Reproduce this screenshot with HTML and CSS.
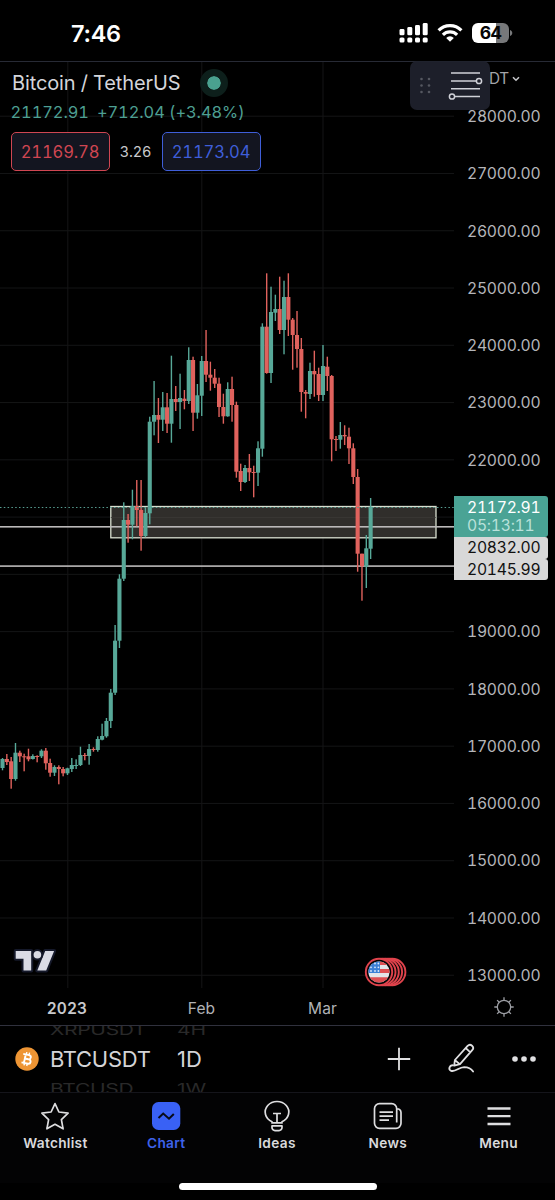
FILE: index.html
```html
<!DOCTYPE html>
<html lang="en">
<head>
<meta charset="utf-8">
<title>Bitcoin / TetherUS</title>
<link rel="stylesheet" href="styles.css">
</head>
<body>
<div class="phone">
  <header class="status">
    <div class="clock">7:46</div>
    <div class="indicators">
      <svg class="signal" width="29" height="20" viewBox="0 0 29 20" fill="#fff">
        <rect x="0.5" y="6" width="5" height="6.3" rx="1.4"/><rect x="8.3" y="4" width="5" height="8.3" rx="1.4"/><rect x="16" y="2" width="5" height="10.3" rx="1.4"/><rect x="23.7" y="0" width="5" height="12.3" rx="1.4"/>
        <rect x="0.5" y="14.6" width="5" height="5" rx="1.5"/><rect x="8.3" y="14.6" width="5" height="5" rx="1.5"/><rect x="16" y="14.6" width="5" height="5" rx="1.5"/><rect x="23.7" y="14.6" width="5" height="5" rx="1.5"/>
      </svg>
      <svg class="wifi" width="26" height="20" viewBox="0 0 26 20" fill="none" stroke="#fff" stroke-width="3.2">
        <path d="M1.6 7.4a16.2 16.2 0 0 1 22.8 0"/><path d="M5.900 11.800a10.100 10.100 0 0 1 14.200 0"/>
        <path d="M13 18.700l-3.800-3.800a5.400 5.400 0 0 1 7.600 0z" fill="#fff" stroke="none"/>
      </svg>
      <div class="battery"><span class="level">64</span></div>
      <svg class="cap" width="4" height="8" viewBox="0 0 4 8"><path d="M0 1c3 1 3 5 0 6z" fill="#77787a"/></svg>
    </div>
  </header>

  <main class="chart">
    <svg class="plot" id="plot" width="454" height="926" viewBox="0 62 454 926"></svg>
    <div class="prices" id="prices"></div>
    <div class="times"><span class="year">2023</span><span class="feb">Feb</span><span class="mar">Mar</span></div>
    <div class="gear">
      <svg width="22" height="22" viewBox="0 0 22 22" fill="none" stroke="#9b9da3" stroke-width="1.3"><circle cx="11" cy="11" r="6.7"/><path d="M11 1.300v3M11 17.700v3M1.300 11h3M17.700 11h3M4.100 4.100l2.100 2.100M15.800 15.800l2.100 2.100M17.900 4.100l-2.100 2.100M6.200 15.800l-2.100 2.100"/></svg>
    </div>

    <section class="legend">
      <div class="title"><span>Bitcoin / TetherUS</span><i class="live"></i></div>
      <div class="change"><span>21172.91</span><span>+712.04 (+3.48%)</span></div>
      <div class="quotes"><span class="quote sell">21169.78</span><span class="spread">3.26</span><span class="quote buy">21173.04</span></div>
    </section>

    <div class="currency"><span>DT</span><svg width="8" height="6" viewBox="0 0 8 6" fill="none" stroke="#c4c5c9" stroke-width="1.6"><path d="M1 1.200l3 3 3-3"/></svg></div>
    <div class="toolbox">
      <svg width="80" height="49" viewBox="0 0 80 49">
        <g fill="#555760"><circle cx="11.500" cy="18" r="1.300"/><circle cx="19" cy="18" r="1.300"/><circle cx="11.500" cy="24.500" r="1.300"/><circle cx="19" cy="24.500" r="1.300"/><circle cx="11.500" cy="31" r="1.300"/><circle cx="19" cy="31" r="1.300"/></g>
        <g fill="none" stroke="#d0d1d8" stroke-width="1.500"><path d="M41 12h29M41 20h25.500M41 27.800h29M44.500 35.500H70"/><circle cx="69" cy="20" r="2.600"/><circle cx="42" cy="35.500" r="2.600"/></g>
      </svg>
    </div>

    <div class="tags">
      <div class="tag last"><span>21172.91</span><span class="countdown">05:13:11</span></div>
      <div class="tag level-tag">20832.00</div>
      <div class="tag level-tag">20145.99</div>
    </div>

    <svg class="brand" width="48" height="30" viewBox="0 0 48 30"><g fill="#dadbe5" stroke="#15192a" stroke-width="4" stroke-linejoin="round" paint-order="stroke"><path d="M4.700 5h15.500v19.500h-7.700V12.700H4.700z"/><path d="M34.200 5h8.900L35.200 24.500h-8.900z"/><circle cx="26.400" cy="8.800" r="3.800"/></g></svg>
    <svg class="events" width="44" height="30" viewBox="0 0 44 30">
      <defs><clipPath id="flag"><circle cx="15" cy="15" r="10.600"/></clipPath></defs>
      <g fill="#050506" stroke="#e0434c" stroke-width="1.900"><circle cx="28.200" cy="15" r="13.200"/><circle cx="24.900" cy="15" r="13.200"/><circle cx="21.600" cy="15" r="13.200"/><circle cx="18.300" cy="15" r="13.200"/><circle cx="15" cy="15" r="13.200"/></g>
      <g clip-path="url(#flag)"><path fill="#e3e5ea" d="M0 0h30v30H0z"/><path fill="#de4f53" d="M15 3.800h13v4.100H15zM15 12h13v4H15zM3 20.200h25v6H3z"/><path fill="#3c80d6" d="M3 3h13v13H3z"/><g fill="#dbe7fa"><circle cx="7" cy="6.500" r=".9"/><circle cx="11" cy="6.500" r=".9"/><circle cx="14.400" cy="6.500" r=".9"/><circle cx="7" cy="10.300" r=".9"/><circle cx="11" cy="10.300" r=".9"/><circle cx="14.400" cy="10.300" r=".9"/><circle cx="7" cy="14" r=".9"/><circle cx="11" cy="14" r=".9"/><circle cx="14.400" cy="14" r=".9"/></g></g>
    </svg>
  </main>

  <section class="picker">
    <svg class="coin" width="24" height="24" viewBox="0 0 24 24"><circle cx="12" cy="12" r="11.700" fill="#ee9534"/><g transform="rotate(12 12 12)" fill="none" stroke="#fff" stroke-width="1.900"><path d="M7.300 7.800h6a2.100 2.100 0 0 1 0 4.200H9.700M9.700 12h4.200a2.200 2.200 0 0 1 0 4.400H7.300M9.800 7.800v8.600"/><path d="M10.400 5.300v2.500M13.200 5.300v2.500M10.400 16.400v2.500M13.200 16.400v2.500" stroke-width="1.400"/></g></svg>
    <div class="wheel symbols"><span class="ghost above">XRPUSDT</span><span class="current">BTCUSDT</span><span class="ghost below">BTCUSD</span></div>
    <div class="wheel intervals"><span class="ghost above">4H</span><span class="current">1D</span><span class="ghost below">1W</span></div>
    <div class="actions">
      <svg width="24" height="24" viewBox="0 0 24 24" stroke="#e0e0e2" stroke-width="1.800"><path d="M12 .8v22.400M.8 12h22.400"/></svg>
      <svg class="pen" width="30" height="32" viewBox="0 0 30 32" fill="none" stroke="#e0e0e2" stroke-width="1.800" stroke-linejoin="round" stroke-linecap="round"><path d="M7.900 17L20.600 2.900a3.100 3.100 0 0 1 4.600 4.300L13 21.100l-5.800 1.600zM8 17.200l4.800 3.900M18.800 5.100l4.300 4"/><path d="M6 22.300c-3.500-.6-5.100 4.300-1.900 5.500 4.500 1.500 7.400-3.500 13-3.700 4.300 0 7.300 1.800 9 4.400"/></svg>
      <svg width="26" height="8" viewBox="0 0 26 8" fill="#e0e0e2"><circle cx="4" cy="4" r="2.800"/><circle cx="13" cy="4" r="2.800"/><circle cx="22" cy="4" r="2.800"/></svg>
    </div>
  </section>

  <nav class="tabs">
    <div class="tab"><svg width="32" height="32" viewBox="0 0 32 32" fill="none" stroke="#dedee0" stroke-width="1.700" stroke-linejoin="round"><path d="M16 3.600l3.900 8.400 9.200 1.100-6.700 6.500 1.700 9.200-8.100-4.500-8.100 4.500 1.700-9.200-6.700-6.500 9.200-1.100z"/></svg>Watchlist</div>
    <div class="tab active"><svg width="32" height="32" viewBox="0 0 32 32"><rect x="2" y="2" width="28.300" height="28" rx="6.500" fill="#3961f5"/><path d="M8.500 18l4.700-4.500 5.800 5.200 4.800-4.700" fill="none" stroke="#080b18" stroke-width="2"/></svg>Chart</div>
    <div class="tab"><svg width="32" height="32" viewBox="0 0 32 32" fill="none" stroke="#dedee0" stroke-width="1.700" stroke-linejoin="round"><path d="M11 22.900v-1.200a11.800 10.600 0 1 1 10 0v1.200zM11 25.900h10v1.700a3 3 0 0 1-3 3h-4a3 3 0 0 1-3-3zM12 13.500h8M16 13.500v9.400"/></svg>Ideas</div>
    <div class="tab"><svg width="32" height="32" viewBox="0 0 32 32" fill="none" stroke="#dedee0" stroke-width="1.700"><path d="M24.700 22.500V8.700a5 5 0 0 0-5-5H7.500a5 5 0 0 0-5 5v14.600a5 5 0 0 0 5 5h16.500a5 5 0 0 0 5-5V12.500a3.800 3.800 0 0 0-4.300-3.700"/><path d="M7.500 12.200h13.500M7.500 16.200h13.500M7.500 20.200h9.500"/></svg>News</div>
    <div class="tab"><svg width="32" height="32" viewBox="0 0 32 32" stroke="#dedee0" stroke-width="2.300"><path d="M4.500 8.500h23M4.500 16.200h23M4.500 24h23"/></svg>Menu</div>
  </nav>
  <div class="home"></div>
</div>
<script src="chart.js"></script>
</body>
</html>
```

FILE: styles.css
```css
* { box-sizing: border-box; }
body { margin: 0; background: #000; color: #c4c5c9; font-family: Inter, "Liberation Sans", sans-serif; }
svg { display: block; flex: none; }
.phone { width: 555px; height: 1200px; display: flex; flex-direction: column; overflow: hidden; }

.status { height: 62px; flex: none; display: flex; justify-content: space-between; padding: 0 41px 0 71px; border-bottom: 1px solid #272a35; }
.clock { padding-top: 19px; font-size: 23.500px; line-height: 30px; font-weight: 600; letter-spacing: -.3px; color: #fff; }
.indicators { display: flex; align-items: flex-start; padding-top: 23px; }
.wifi { margin-left: 9px; }
.battery { width: 37px; height: 20px; margin-left: 9.500px; border-radius: 6px; background: linear-gradient(90deg, #fff 64%, #77787a 64%); text-align: center; }
.level { display: block; font-size: 17.500px; line-height: 20px; font-weight: 700; letter-spacing: -.9px; color: #060606; }
.cap { margin: 6px 0 0 1px; }

.chart { position: relative; height: 963px; flex: none; display: grid; grid-template: 926px 37px / 454px 101px; font-variant-numeric: tabular-nums; }
.prices { display: flex; flex-direction: column; padding: 26px 0 0 13px; }
.price { height: 57.270px; flex: none; font-size: 15.700px; line-height: 58px; letter-spacing: -.25px; color: #b4b5b9; }
.times { display: flex; font-size: 15.500px; line-height: 41px; color: #b1b2b6; }
.times span { text-align: center; }
.year { width: 134px; font-weight: 600; letter-spacing: .1px; color: #c8c9cc; }
.feb { width: 135px; letter-spacing: .1px; }
.mar { width: 107px; letter-spacing: .1px; }
.gear { padding: 8px 0 0 39px; }

.legend { position: absolute; left: 11px; top: 6px; display: flex; flex-direction: column; }
.title { display: flex; align-items: center; gap: 20px; height: 30px; padding-left: 1px; font-size: 20px; letter-spacing: -.12px; color: #d4d5da; }
.live { width: 28px; height: 28px; border-radius: 50%; background: #4aa18f; border: 7.500px solid #0d1f1b; background-clip: padding-box; }
.change { display: flex; gap: 8px; margin-left: -.5px; font-size: 16.400px; line-height: 29px; letter-spacing: -.05px; color: #4d9f92; }
.quotes { display: flex; align-items: center; margin: 5px 0 0 -.5px; }
.quote { width: 99px; height: 39px; border: 1.500px solid; border-radius: 5px; background: #131520; font-size: 16.600px; line-height: 38px; letter-spacing: -.15px; text-align: center; }
.sell { color: #cf4652; }
.buy { color: #3f5ed8; }
.spread { width: 52px; text-align: center; font-size: 14.500px; letter-spacing: -.15px; color: #c8c9cc; }

.currency { position: absolute; left: 489px; top: 6px; display: flex; align-items: center; gap: 3px; font-size: 15.300px; letter-spacing: -.4px; line-height: 22px; color: #a3a4a9; }
.toolbox { position: absolute; left: 410px; top: -1px; width: 80px; height: 49px; border-radius: 7px; background: rgba(31, 33, 45, .93); }

.tags { position: absolute; left: 454px; top: 434px; width: 94px; display: flex; flex-direction: column; }
.tag { padding-left: 13px; font-size: 15.700px; line-height: 21px; letter-spacing: -.25px; border-radius: 0 3px 3px 0; }
.last { height: 41px; padding-top: 3px; background: #4aa395; color: #fff; display: flex; flex-direction: column; }
.last span { line-height: 18px; }
.last .countdown { color: #b9e1da; }
.level-tag { height: 21.500px; background: #d8d8d8; color: #111; }
.brand { position: absolute; left: 11px; top: 884px; }
.events { position: absolute; left: 364px; top: 895px; }

.picker { height: 68px; flex: none; display: flex; align-items: center; padding-left: 15px; border-top: 1px solid #30313d; border-bottom: 1px solid #15151b; }
.wheel { height: 66px; display: flex; flex-direction: column; justify-content: space-between; overflow: hidden; font-size: 22px; color: #d4d4d7; }
.symbols { width: 127px; margin-left: 11px; letter-spacing: -.3px; }
.intervals { width: 40px; }
.current { line-height: 28px; }
.ghost { color: #292929; line-height: 14px; height: 12px; font-size: 21px; transform: scaleY(.7); }
.above { line-height: 6px; }
.below { line-height: 22px; }
.actions { flex: 1; display: flex; align-items: center; justify-content: flex-end; gap: 35px; padding-right: 18px; }
.pen { margin: 0 -1px 0 1px; }

.tabs { height: 90px; flex: none; display: flex; padding: 7px 1px 0 0; background: #030304; }
.tab { flex: 1; display: flex; flex-direction: column; align-items: center; gap: 2px; font-size: 13.700px; line-height: 18px; font-weight: 600; letter-spacing: .3px; color: #d9d9dc; }
.active { color: #3e62ea; }
.home { width: 198px; height: 7px; margin: 0 0 0 178.500px; border-radius: 4px; background: #fff; }
```

FILE: chart.js
```js
// Each candle: colour, body top, body bottom, wick top, wick bottom.
const UP = '#57a898', DOWN = '#e0625d';
const candles = [
  ['u',759,768,758,770.3],['d',759,762,754,765],['d',761.3,779,757,788.7],['u',752.7,779,743,780.7],
  ['d',752.7,756.3,750.7,762],['d',756.3,757.3,753.7,771.3],['d',756.3,759.3,748.7,761.3],['u',756,759,754.3,759.5],
  ['d',756,757,755.3,762.3],['u',750.7,756.3,749.3,758],['d',750.7,763.3,748,769.7],['d',763,772.7,758.7,776.7],
  ['u',767,772.7,765.3,776],['d',767,769,765.3,784.3],['d',769,773.3,767,776.3],['u',768.3,773.3,767.7,775],
  ['u',765,769,758,772],['u',765,766,759.3,769],['u',755,765,746.7,766],['d',755,756,753,760.3],
  ['u',749,756,744,764.7],['d',749,750,747.3,751.7],['u',739,750,736.3,751.7],['u',736,739.7,723.7,740.3],
  ['u',721,736.3,718,737.7],['u',692.7,721,689,728],['u',640.7,692.7,625,695],['u',578.7,640.7,574.3,648],
  ['u',520,578.7,502.3,581],['d',520,524.7,514,542.7],['u',506,524.7,489.7,539.3],['d',506,510,480,526.3],
  ['d',510,536,480,550.7],['u',513,536,507.3,537.3],['u',421.7,513.3,416.7,524.3],['u',415,421.7,381,435.3],
  ['d',415,419.7,398,443],['u',407.3,419.7,392,431],['d',407.3,423.7,393,433],['u',399,423.7,355.7,442.7],
  ['d',399,402,386,411],['u',398,402,373.7,429],['d',398.7,401,390,409.3],['u',360,401,347.3,404],
  ['d',360,412.7,356.7,431],['u',395.3,412.7,384,418.7],['u',361,395.7,356,416],['d',361,374.7,330,382],
  ['d',374.7,377.7,361.7,390.7],['d',377.7,383.7,369,388],['d',383.7,407,377.7,417],['d',407,416.3,393.7,423.7],
  ['u',389,416.3,382.3,416.7],['d',389,405,376.7,421.7],['d',405,471.7,401.7,477.7],['d',471,482,463.7,491],
  ['u',468,482,465,483],['d',468,472.3,454,481],['d',472,473,465.7,497.3],['u',448.3,472.7,441.3,486],
  ['u',326.7,448.7,323.3,456.7],['d',326.7,373,273.3,373.7],['u',312,373,286.7,383],['u',309,312.7,294.7,321],
  ['d',309,330,276.7,334],['u',297,330,280.7,354.3],['d',297,319.7,273.3,336],['d',319.7,335,318,369.7],
  ['d',335,349,311,367.7],['d',349,392,338,411.7],['d',392,393.7,390,418.3],['u',371,394,362.7,399],
  ['d',371,374.3,350.7,396.7],['d',374,395,367.7,401],['u',366,395,345,401],['d',366.7,376,356.7,391],
  ['d',376,439.3,375,461.3],['d',439,440,436,451],['u',435,439.7,422,448.7],['d',435,436.3,425.3,445],
  ['d',436.7,448.3,427.7,464],['d',448.3,477,443.3,484],['d',477,553.7,469,571.7],['d',553.7,566.3,553.7,600.7],
  ['u',548.3,566.7,535,588],['u',506.7,548.7,498,559]
];

const rect = (x, y, w, h, fill) => `<rect x="${x}" y="${y}" width="${w}" height="${h}" fill="${fill}"/>`;
let out = '';
for (let i = 0; i < 16; i++) out += rect(0, 115.7 + i * 57.27, 454, 1, '#141516');
for (const x of [67.3, 201.3, 322.5]) out += rect(x, 62, 1, 926, '#141516');
out += '<rect x="110.800" y="506.500" width="325.200" height="31.300" fill="#302e2b" stroke="#d9dfd0" stroke-width="1.300"/>';
out += rect(110.8, 517, 325, .8, '#3b3936');
out += rect(0, 526, 454, 1.6, '#bbb9b9') + rect(0, 565.3, 454, 1.6, '#bbb9b9');
candles.forEach(([dir, top, bottom, high, low], i) => {
  const x = 2.5 + i * 4.331, fill = dir === 'u' ? UP : DOWN;
  out += rect(x - .7, high, 1.4, low - high, fill) + rect(x - 2.05, top, 4.1, bottom - top, fill);
});
out += '<path d="M0 507.500H454" stroke="#579d91" stroke-width="1.100" stroke-dasharray="1.500 2.300"/>';
document.getElementById('plot').innerHTML = out;

// The rows for 21000 and 20000 stay blank under the price tags.
let rows = '';
for (let p = 28000; p >= 13000; p -= 1000) {
  rows += `<div class="price">${p === 21000 || p === 20000 ? '' : p + '.00'}</div>`;
}
document.getElementById('prices').innerHTML = rows;
```
